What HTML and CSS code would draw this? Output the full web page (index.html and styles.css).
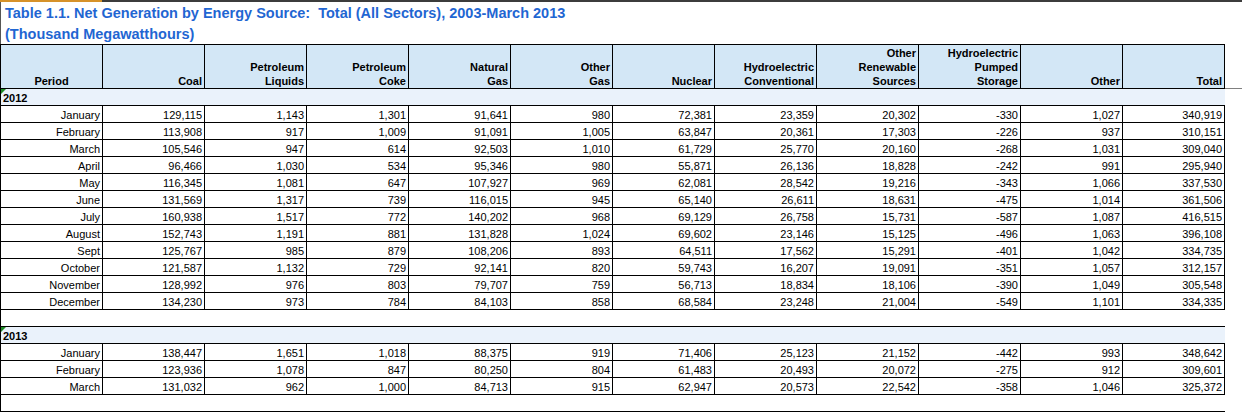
FILE: index.html
```html
<!DOCTYPE html>
<html lang="en">
<head>
<meta charset="utf-8">
<title>Table 1.1. Net Generation by Energy Source</title>
<link rel="stylesheet" href="styles.css">
</head>
<body>
<div class="page">
  <div class="topbar"><div class="topbar-accent"></div><div class="topbar-rest"></div></div>
  <div class="title">
    <div class="title-line">Table 1.1. Net Generation by Energy Source:&nbsp; Total (All Sectors), 2003-March 2013</div>
    <div class="title-line">(Thousand Megawatthours)</div>
  </div>
  <div class="table-wrap">
    <table class="grid">
      <colgroup>
        <col class="c"><col class="c"><col class="c"><col class="c"><col class="c"><col class="c">
        <col class="c"><col class="c"><col class="c"><col class="c"><col class="c"><col class="c">
      </colgroup>
      <thead>
        <tr class="head">
          <th class="period">Period</th>
          <th>Coal</th>
          <th>Petroleum<br>Liquids</th>
          <th>Petroleum<br>Coke</th>
          <th>Natural<br>Gas</th>
          <th>Other<br>Gas</th>
          <th>Nuclear</th>
          <th>Hydroelectric<br>Conventional</th>
          <th>Other<br>Renewable<br>Sources</th>
          <th>Hydroelectric<br>Pumped<br>Storage</th>
          <th>Other</th>
          <th>Total</th>
        </tr>
      </thead>
      <tbody>
        <tr class="year"><td colspan="12"><span class="flag"></span>2012</td></tr>
        <tr><td>January</td><td>129,115</td><td>1,143</td><td>1,301</td><td>91,641</td><td>980</td><td>72,381</td><td>23,359</td><td>20,302</td><td>-330</td><td>1,027</td><td>340,919</td></tr>
        <tr><td>February</td><td>113,908</td><td>917</td><td>1,009</td><td>91,091</td><td>1,005</td><td>63,847</td><td>20,361</td><td>17,303</td><td>-226</td><td>937</td><td>310,151</td></tr>
        <tr><td>March</td><td>105,546</td><td>947</td><td>614</td><td>92,503</td><td>1,010</td><td>61,729</td><td>25,770</td><td>20,160</td><td>-268</td><td>1,031</td><td>309,040</td></tr>
        <tr><td>April</td><td>96,466</td><td>1,030</td><td>534</td><td>95,346</td><td>980</td><td>55,871</td><td>26,136</td><td>18,828</td><td>-242</td><td>991</td><td>295,940</td></tr>
        <tr><td>May</td><td>116,345</td><td>1,081</td><td>647</td><td>107,927</td><td>969</td><td>62,081</td><td>28,542</td><td>19,216</td><td>-343</td><td>1,066</td><td>337,530</td></tr>
        <tr><td>June</td><td>131,569</td><td>1,317</td><td>739</td><td>116,015</td><td>945</td><td>65,140</td><td>26,611</td><td>18,631</td><td>-475</td><td>1,014</td><td>361,506</td></tr>
        <tr><td>July</td><td>160,938</td><td>1,517</td><td>772</td><td>140,202</td><td>968</td><td>69,129</td><td>26,758</td><td>15,731</td><td>-587</td><td>1,087</td><td>416,515</td></tr>
        <tr><td>August</td><td>152,743</td><td>1,191</td><td>881</td><td>131,828</td><td>1,024</td><td>69,602</td><td>23,146</td><td>15,125</td><td>-496</td><td>1,063</td><td>396,108</td></tr>
        <tr><td>Sept</td><td>125,767</td><td>985</td><td>879</td><td>108,206</td><td>893</td><td>64,511</td><td>17,562</td><td>15,291</td><td>-401</td><td>1,042</td><td>334,735</td></tr>
        <tr><td>October</td><td>121,587</td><td>1,132</td><td>729</td><td>92,141</td><td>820</td><td>59,743</td><td>16,207</td><td>19,091</td><td>-351</td><td>1,057</td><td>312,157</td></tr>
        <tr><td>November</td><td>128,992</td><td>976</td><td>803</td><td>79,707</td><td>759</td><td>56,713</td><td>18,834</td><td>18,106</td><td>-390</td><td>1,049</td><td>305,548</td></tr>
        <tr><td>December</td><td>134,230</td><td>973</td><td>784</td><td>84,103</td><td>858</td><td>68,584</td><td>23,248</td><td>21,004</td><td>-549</td><td>1,101</td><td>334,335</td></tr>
        <tr class="gap"><td colspan="12"></td></tr>
        <tr class="year"><td colspan="12"><span class="flag"></span>2013</td></tr>
        <tr><td>January</td><td>138,447</td><td>1,651</td><td>1,018</td><td>88,375</td><td>919</td><td>71,406</td><td>25,123</td><td>21,152</td><td>-442</td><td>993</td><td>348,642</td></tr>
        <tr><td>February</td><td>123,936</td><td>1,078</td><td>847</td><td>80,250</td><td>804</td><td>61,483</td><td>20,493</td><td>20,072</td><td>-275</td><td>912</td><td>309,601</td></tr>
        <tr><td>March</td><td>131,032</td><td>962</td><td>1,000</td><td>84,713</td><td>915</td><td>62,947</td><td>20,573</td><td>22,542</td><td>-358</td><td>1,046</td><td>325,372</td></tr>
        <tr class="gap last"><td colspan="12"></td></tr>
      </tbody>
    </table>
    <div class="head-tail"></div>
  </div>
</div>
</body>
</html>
```

FILE: styles.css
```css
html, body {
  margin: 0;
  padding: 0;
  background: #ffffff;
}

body {
  width: 1242px;
  height: 412px;
  overflow: hidden;
  font-family: "Liberation Sans", Arial, sans-serif;
  color: #000000;
}

.page {
  width: 1242px;
}

.topbar {
  display: flex;
  height: 2px;
}

.topbar-accent {
  width: 102px;
  background: #d6922a;
}

.topbar-rest {
  flex: 1;
  background: #3c3c3c;
}

.title {
  height: 42px;
  padding-left: 4px;
  border-left: 1px solid #555555;
  box-sizing: border-box;
  color: #1f66d2;
  font-weight: bold;
  font-size: 14.5px;
  white-space: nowrap;
}

.title-line {
  line-height: 21px;
}

.title-line:first-child {
  padding-top: 1px;
}

.table-wrap {
  display: flex;
  align-items: flex-start;
}

.grid {
  border-collapse: collapse;
  table-layout: fixed;
  width: 1225px;
  font-size: 11px;
}

.grid col.c {
  width: 102px;
}

.grid th,
.grid td {
  border: 1px solid #000000;
  padding: 0 2px 0 0;
  text-align: right;
  vertical-align: bottom;
  white-space: nowrap;
  overflow: hidden;
}

.grid th {
  background: #d3e7f6;
  font-weight: bold;
  line-height: 14px;
  height: 43px;
  padding-bottom: 0;
}

.grid th.period {
  text-align: center;
  padding-right: 0;
}

.grid td {
  height: 16px;
  line-height: 14px;
}

.grid tr.year td {
  position: relative;
  background: #eaf2fb;
  text-align: left;
  font-weight: bold;
  padding-left: 2px;
  border-right: none;
}

.flag {
  position: absolute;
  left: 0;
  top: 0;
  width: 0;
  height: 0;
  border-top: 5px solid #1d8a24;
  border-right: 5px solid transparent;
}

.grid tr.gap td {
  border-right: none;
  background: #ffffff;
}

.head-tail {
  width: 17px;
  height: 44px;
  border-bottom: 1px solid #808080;
}
```
